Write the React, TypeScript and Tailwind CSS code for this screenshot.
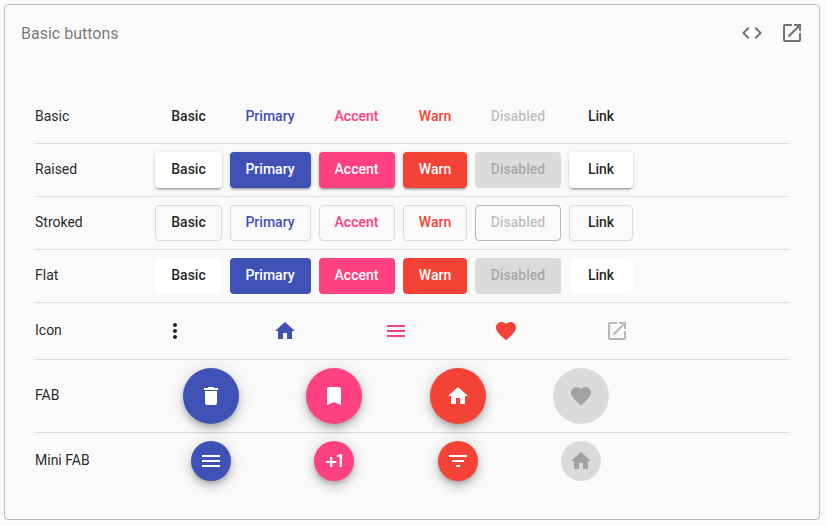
import type { ReactNode } from "react";

const icons = {
  code: "M9.4 16.6L4.8 12l4.6-4.6L8 6l-6 6 6 6 1.4-1.4zm5.2 0l4.6-4.6-4.6-4.6L16 6l6 6-6 6-1.4-1.4z",
  open: "M19 19H5V5h7V3H5c-1.11 0-2 .9-2 2v14c0 1.1.89 2 2 2h14c1.1 0 2-.9 2-2v-7h-2v7zM14 3v2h3.59l-9.83 9.83 1.41 1.41L19 6.41V10h2V3h-7z",
  more: "M12 8c1.1 0 2-.9 2-2s-.9-2-2-2-2 .9-2 2 .9 2 2 2zm0 2c-1.1 0-2 .9-2 2s.9 2 2 2 2-.9 2-2-.9-2-2-2zm0 6c-1.1 0-2 .9-2 2s.9 2 2 2 2-.9 2-2-.9-2-2-2z",
  home: "M10 20v-6h4v6h5v-8h3L12 3 2 12h3v8z",
  menu: "M3 18h18v-2H3v2zm0-5h18v-2H3v2zm0-7v2h18V6H3z",
  heart:
    "M12 21.35l-1.45-1.32C5.4 15.36 2 12.28 2 8.5 2 5.42 4.42 3 7.5 3c1.74 0 3.41.81 4.5 2.09C13.09 3.81 14.76 3 16.5 3 19.58 3 22 5.42 22 8.5c0 3.78-3.4 6.86-8.55 11.54L12 21.35z",
  trash: "M6 19c0 1.1.9 2 2 2h8c1.1 0 2-.9 2-2V7H6v12zM19 4h-3.5l-1-1h-5l-1 1H5v2h14V4z",
  bookmark: "M17 3H7c-1.1 0-1.99.9-1.99 2L5 21l7-3 7 3V5c0-1.1-.9-2-2-2z",
  plusOne: "M10.3 8H8v4H3.9v2.1H8V18h2.3v-3.9h4.1V12h-4.1zM14.8 6.2v2l2.8-.6V18H20V5h-.6z",
  filter: "M10 18h4v-2h-4v2zM3 6v2h18V6H3zm3 7h12v-2H6v2z",
};

type IconName = keyof typeof icons;

function Icon({ name }: { name: IconName }) {
  return (
    <svg viewBox="0 0 24 24" className="size-6 shrink-0 fill-current">
      <path d={icons[name]} />
    </svg>
  );
}

type Variant = "basic" | "raised" | "stroked" | "flat";

const buttons = [
  { label: "Basic", width: "w-[67px]", text: "text-black/87", fill: "bg-white text-black/87" },
  { label: "Primary", width: "w-[81px] pr-px", text: "text-[#3f51b5]", fill: "bg-[#3f51b5] text-white" },
  { label: "Accent", width: "w-[76px] pr-px", text: "text-[#ff4081]", fill: "bg-[#ff4081] text-white" },
  { label: "Warn", width: "w-16", text: "text-[#f44336]", fill: "bg-[#f44336] text-white" },
  { label: "Disabled", width: "w-[86px]", text: "text-black/26", fill: "bg-black/12 text-black/26", disabled: true },
  { label: "Link", width: "w-16", text: "text-black/87", fill: "bg-white text-black/87" },
];

const raisedShadow =
  "shadow-[0_3px_1px_-2px_rgba(0,0,0,0.2),0_2px_2px_0_rgba(0,0,0,0.14),0_1px_5px_0_rgba(0,0,0,0.12)]";
const fabShadow =
  "shadow-[0_3px_5px_-1px_rgba(0,0,0,0.2),0_6px_10px_0_rgba(0,0,0,0.14),0_1px_18px_0_rgba(0,0,0,0.12)]";

function Row({ label, last, children }: { label: string; last?: boolean; children: ReactNode }) {
  return (
    <section className={`flex items-center py-2 ${last ? "" : "border-b border-black/12"}`}>
      <div className="w-[120px] shrink-0 pb-0.5 text-sm font-normal text-black/87">{label}</div>
      {children}
    </section>
  );
}

function ButtonRow({ label, variant }: { label: string; variant: Variant }) {
  return (
    <Row label={label}>
      <div className="flex gap-2">
        {buttons.map((b) => {
          const filled = variant === "raised" || variant === "flat";
          const border = variant === "stroked" ? (b.disabled ? "border border-black/26" : "border border-black/12") : "";
          const shadow = variant === "raised" && !b.disabled ? raisedShadow : "";
          return (
            <button
              key={b.label}
              disabled={b.disabled}
              className={`flex h-9 items-center justify-center rounded-[4px] pb-0.5 text-sm font-medium ${b.width} ${filled ? b.fill : b.text} ${border} ${shadow}`}
            >
              {b.label}
            </button>
          );
        })}
      </div>
    </Row>
  );
}

const iconButtons: { icon: IconName; color: string }[] = [
  { icon: "more", color: "text-black/87" },
  { icon: "home", color: "pr-px text-[#3f51b5]" },
  { icon: "menu", color: "text-[#ff4081]" },
  { icon: "heart", color: "pr-px text-[#f44336]" },
  { icon: "open", color: "text-black/26" },
];

const fabColors = ["bg-[#3f51b5] text-white", "bg-[#ff4081] text-white", "bg-[#f44336] text-white", "bg-black/12 text-black/26"];

function FabRow({ label, names, mini }: { label: string; names: IconName[]; mini?: boolean }) {
  return (
    <Row label={label} last={mini}>
      <div className={`flex w-[482px] justify-between ${mini ? "px-9" : "px-7"}`}>
        {names.map((name, i) => (
          <button
            key={name}
            disabled={i === 3}
            className={`flex items-center justify-center rounded-full ${mini ? "size-10" : "size-14"} ${fabColors[i]} ${i < 3 ? fabShadow : ""}`}
          >
            <Icon name={name} />
          </button>
        ))}
      </div>
    </Row>
  );
}

export default function App() {
  return (
    <div className="h-[526px] w-[827px] bg-[#fafafa] p-1 font-[Roboto,sans-serif]">
      <div className="h-[516px] w-[816px] rounded-[4px] border border-black/24">
        <header className="flex h-14 items-center justify-between pr-[15px] pl-4">
          <h2 className="pt-0.5 text-base font-normal text-black/54">Basic buttons</h2>
          <div className="flex gap-4 text-black/54">
            <Icon name="code" />
            <Icon name="open" />
          </div>
        </header>
        <main className="px-[30px] pt-[30px]">
          <ButtonRow label="Basic" variant="basic" />
          <ButtonRow label="Raised" variant="raised" />
          <ButtonRow label="Stroked" variant="stroked" />
          <ButtonRow label="Flat" variant="flat" />
          <Row label="Icon">
            <div className="flex w-[482px] justify-between">
              {iconButtons.map((b) => (
                <button key={b.icon} className={`flex size-10 items-center justify-center ${b.color}`}>
                  <Icon name={b.icon} />
                </button>
              ))}
            </div>
          </Row>
          <FabRow label="FAB" names={["trash", "bookmark", "home", "heart"]} />
          <FabRow label="Mini FAB" names={["menu", "plusOne", "filter", "home"]} mini />
        </main>
      </div>
    </div>
  );
}
